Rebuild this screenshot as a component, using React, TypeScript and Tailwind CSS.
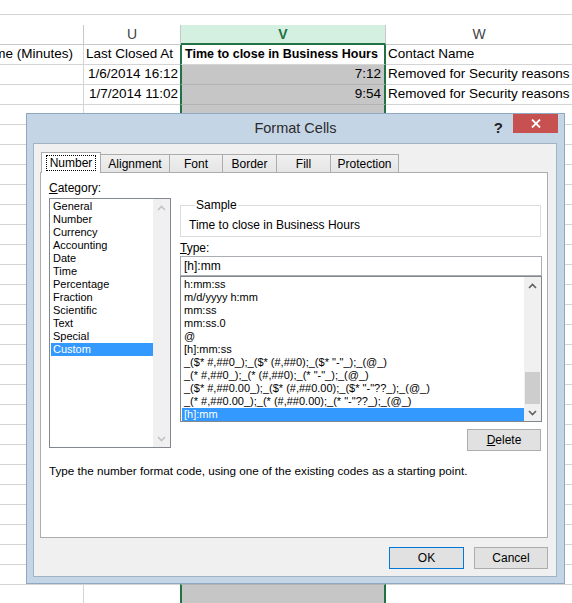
import React from "react";

const sheetFont = "font-['Liberation_Sans',Arial,sans-serif]";

const categories = [
  "General",
  "Number",
  "Currency",
  "Accounting",
  "Date",
  "Time",
  "Percentage",
  "Fraction",
  "Scientific",
  "Text",
  "Special",
  "Custom",
];

const formats = [
  "h:mm:ss",
  "m/d/yyyy h:mm",
  "mm:ss",
  "mm:ss.0",
  "@",
  "[h]:mm:ss",
  '_($* #,##0_);_($* (#,##0);_($* "-"_);_(@_)',
  '_(* #,##0_);_(* (#,##0);_(* "-"_);_(@_)',
  '_($* #,##0.00_);_($* (#,##0.00);_($* "-"??_);_(@_)',
  '_(* #,##0.00_);_(* (#,##0.00);_(* "-"??_);_(@_)',
  "[h]:mm",
];

const tabs = [
  { label: "Alignment", w: "w-[70px]" },
  { label: "Font", w: "w-[54px]" },
  { label: "Border", w: "w-[55px]" },
  { label: "Fill", w: "w-[55px]" },
  { label: "Protection", w: "w-[69px]" },
];

function Chevron({ up, dark }: { up?: boolean; dark?: boolean }) {
  return (
    <svg width="9" height="6" viewBox="0 0 9 6" fill="none">
      <polyline
        points={up ? "1,5 4.5,1.5 8,5" : "1,1 4.5,4.5 8,1"}
        stroke={dark ? "#606060" : "#c2c2c2"}
        strokeWidth="1.6"
      />
    </svg>
  );
}

function ScrollBar({ thumb }: { thumb?: boolean }) {
  return (
    <div className="flex w-[17px] flex-col bg-[#f0f0f0]">
      <div className="flex h-[17px] items-center justify-center">
        <Chevron up dark={thumb} />
      </div>
      <div className="flex-1" />
      {thumb && <div className="mx-[1px] h-[32px] bg-[#cdcdcd]" />}
      <div className="flex h-[17px] items-center justify-center">
        <Chevron dark={thumb} />
      </div>
    </div>
  );
}

function Sheet() {
  const rows = Array.from({ length: 28 }, (_, i) => i);
  return (
    <div className={`${sheetFont} text-[13.5px] text-black`}>
      <div className="h-[15px] border-b border-[#d4d4d4]" />
      <div className="h-[10px]" />
      {/* column headers */}
      <div className="flex h-[20px] text-[14px] text-[#444]">
        <div className="w-[84px] border-r border-b border-[#c8c8c8]" />
        <div className="flex w-[97px] items-center justify-center border-r border-b border-[#c8c8c8]">U</div>
        <div className="flex w-[205px] items-center justify-center border-r border-b-2 border-r-[#c8c8c8] border-b-[#217346] bg-[#d3f0e0] font-bold text-[#217346]">
          V
        </div>
        <div className="flex flex-1 items-center justify-center border-b border-[#c8c8c8]">W</div>
      </div>
      {rows.map((i) => (
        <div key={i} className="flex h-[20px]">
          <div className="flex w-[84px] items-center justify-end overflow-hidden whitespace-nowrap border-r border-b border-[#d4d4d4] pr-[10px]">
            {i === 0 ? "Close Time (Minutes)" : ""}
          </div>
          <div
            className={`flex w-[96px] items-center overflow-hidden whitespace-nowrap border-b border-[#d4d4d4] ${
              i === 0 ? "pl-[2px]" : "justify-end pr-[2px]"
            }`}
          >
            {i === 0 ? "Last Closed At" : i === 1 ? "1/6/2014 16:12" : i === 2 ? "1/7/2014 11:02" : ""}
          </div>
          <div
            className={`flex w-[206px] items-center whitespace-nowrap border-x-2 border-x-[#217346] border-b ${
              i === 0
                ? "border-b-[#d4d4d4] bg-white pl-[3px] text-[12.5px] font-bold"
                : "justify-end border-b-[#b4b4b4] bg-[#c6c6c6] pr-[3px]"
            }`}
          >
            {i === 0 ? "Time to close in Business Hours" : i === 1 ? "7:12" : i === 2 ? "9:54" : ""}
          </div>
          <div className="flex flex-1 items-center overflow-hidden whitespace-nowrap border-b border-[#d4d4d4] pl-[2px]">
            {i === 0 ? "Contact Name" : i === 1 || i === 2 ? "Removed for Security reasons" : ""}
          </div>
        </div>
      ))}
    </div>
  );
}

function Dialog() {
  return (
    <div
      className={`${sheetFont} absolute left-[26px] top-[113px] flex h-[471px] w-[539px] flex-col border border-[#8fa7c0] bg-[#c4d5e6] text-[12px] text-black`}
    >
      {/* title bar */}
      <div className="relative flex h-[29px] items-center justify-center text-[14.5px] text-[#2b2b2b]">
        Format Cells
        <span className="absolute right-[61px] top-[3px] text-[15px] font-bold text-[#222]">?</span>
        <div className="absolute right-[6px] top-0 flex h-[19px] w-[45px] items-center justify-center bg-[#c75050]">
          <svg width="10" height="9" viewBox="0 0 10 9">
            <path d="M1 0.5 L9 8.5 M9 0.5 L1 8.5" stroke="#fff" strokeWidth="1.8" />
          </svg>
        </div>
      </div>

      {/* client area */}
      <div className="ml-[6px] flex h-[434px] w-[524px] flex-col border border-[#9fb2c6] bg-[#f0f0f0] pt-[8px] pl-[6px] pr-[8px]">
        {/* tabs */}
        <div className="ml-[1px] flex h-[20px] items-end">
          <div className="relative z-10 -mb-px flex h-[21px] w-[60px] items-center justify-center border border-b-0 border-[#acacac] bg-white">
            <span className="border border-dotted border-black px-[3px] leading-[14px]">Number</span>
          </div>
          {tabs.map((t) => (
            <div
              key={t.label}
              className={`-ml-px flex h-[18px] ${t.w} items-center justify-center border border-b-0 border-[#acacac] bg-gradient-to-b from-[#f0f0f0] to-[#e5e5e5]`}
            >
              {t.label}
            </div>
          ))}
        </div>

        {/* tab page */}
        <div className="flex h-[366px] flex-col border border-[#acacac] bg-white">
          <div className="flex pt-[8px] pl-[8px]">
            {/* category column */}
            <div className="flex flex-col">
              <div className="h-[15px] leading-[15px]">
                <span className="underline">C</span>ategory:
              </div>
              <div className="mt-[2px] flex h-[250px] w-[122px] border border-[#828790] bg-white text-[11px]">
                <div className="ml-[1px] w-[102px] pt-[1px]">
                  {categories.map((c) => (
                    <div
                      key={c}
                      className={`h-[13px] pl-[2px] leading-[13px] ${
                        c === "Custom" ? "bg-[#3399ff] text-white" : ""
                      }`}
                    >
                      {c}
                    </div>
                  ))}
                </div>
                <ScrollBar />
              </div>
            </div>

            {/* right column */}
            <div className="ml-[9px] flex w-[362px] flex-col">
              <fieldset className="mt-[17px] w-[361px] border border-[#dcdcdc] pt-[6px] pb-[4px] pl-[8px]">
                <legend className="ml-[6px] px-[1px] leading-[14px]">Sample</legend>
                <div className="leading-[14px]">Time to close in Business Hours</div>
              </fieldset>
              <div className="mt-[4px] leading-[14px]">
                <span className="underline">T</span>ype:
              </div>
              <div className="mt-[1px] flex h-[20px] items-center border border-[#abadb3] bg-white pl-[3px]">
                [h]:mm
              </div>
              <div className="flex h-[146px] border border-[#828790] bg-white text-[11px]">
                <div className="ml-[1px] w-[342px] pt-[1px]">
                  {formats.map((f, i) => (
                    <div
                      key={i}
                      className={`h-[13px] whitespace-pre pl-[2px] leading-[13px] ${
                        i === formats.length - 1 ? "bg-[#3399ff] text-white" : ""
                      }`}
                    >
                      {f}
                    </div>
                  ))}
                </div>
                <ScrollBar thumb />
              </div>
              <div className="mt-[7px] mr-[1px] flex h-[22px] w-[74px] items-center justify-center self-end border border-[#adadad] bg-[#e1e1e1]">
                <span className="underline">D</span>elete
              </div>
            </div>
          </div>
          <div className="mt-[13px] pl-[8px] text-[11.7px] leading-[14px]">
            Type the number format code, using one of the existing codes as a starting point.
          </div>
        </div>

        {/* buttons */}
        <div className="mt-[9px] flex justify-end gap-[10px]">
          <div className="flex h-[22px] w-[75px] items-center justify-center border border-[#0078d7] bg-[#e1e1e1]">
            OK
          </div>
          <div className="flex h-[22px] w-[74px] items-center justify-center border border-[#adadad] bg-[#e1e1e1]">
            Cancel
          </div>
        </div>
      </div>
    </div>
  );
}

export default function App() {
  return (
    <div className="relative h-[603px] w-[572px] overflow-hidden bg-white">
      <Sheet />
      <Dialog />
    </div>
  );
}
